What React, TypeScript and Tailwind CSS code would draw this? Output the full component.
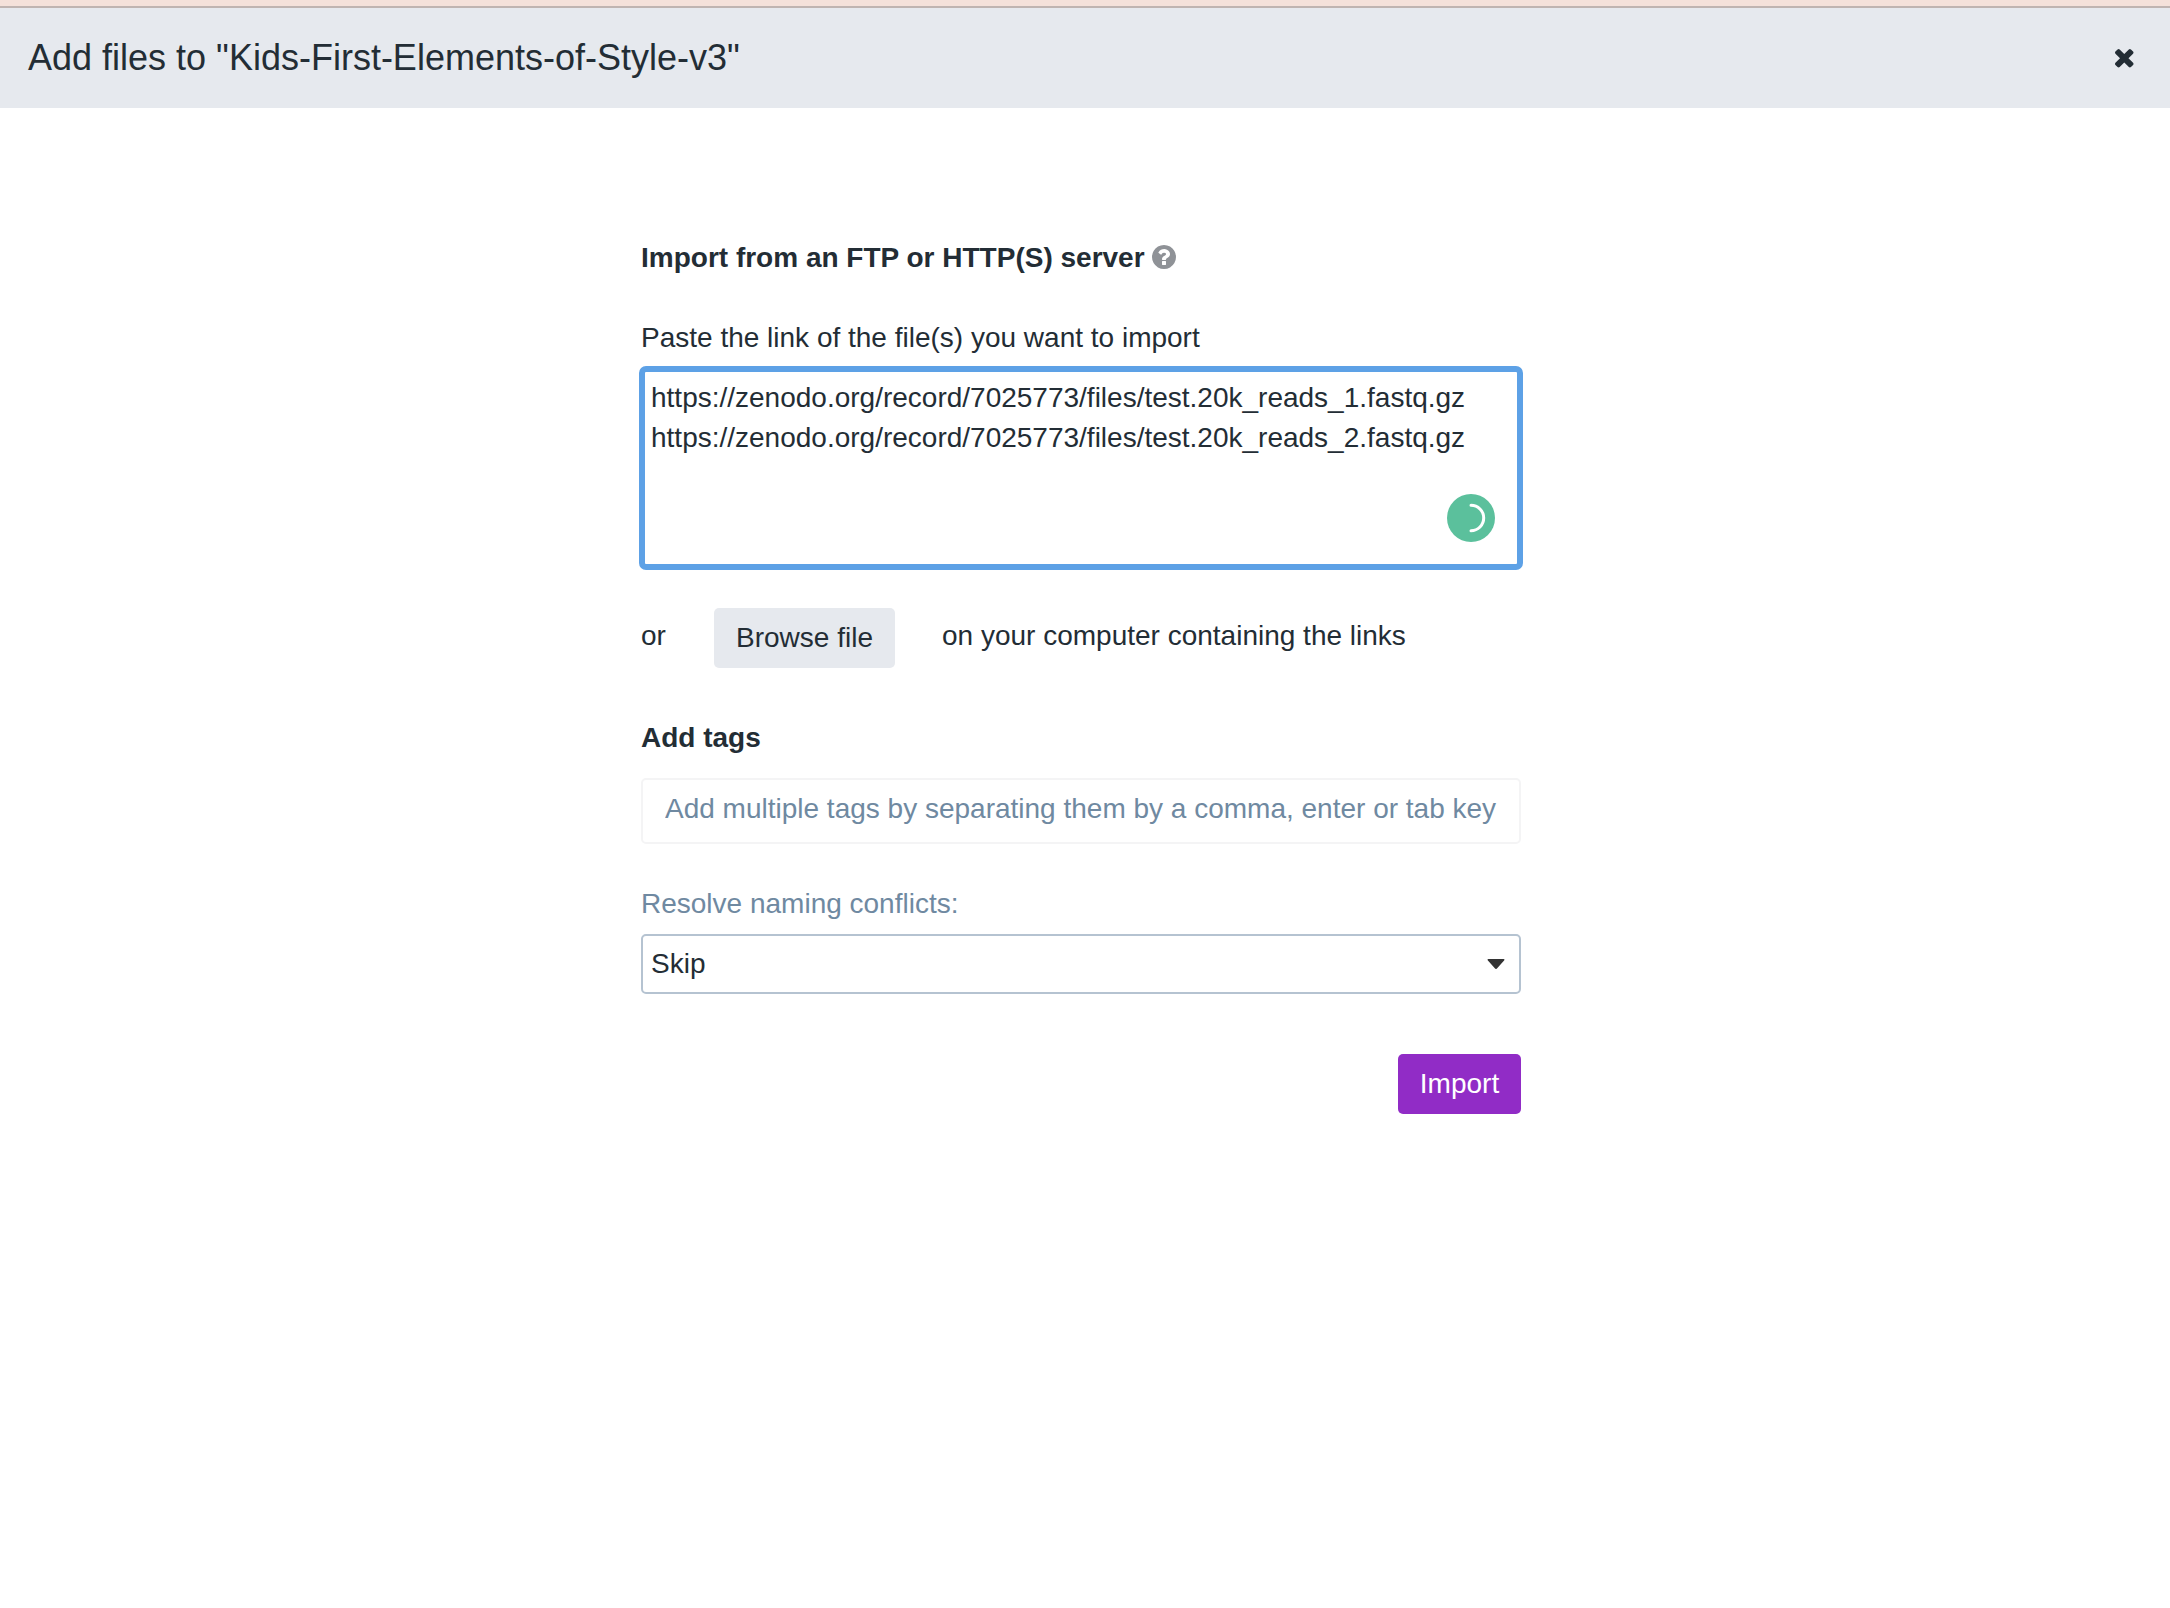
function CloseIcon() {
  return (
    <svg viewBox="110 366 1188 1188" className="block size-[18.500px]" fill="currentColor" aria-hidden="true">
      <path d="M1298 1322q0 40-28 68l-136 136q-28 28-68 28t-68-28l-294-294-294 294q-28 28-68 28t-68-28l-136-136q-28-28-28-68t28-68l294-294-294-294q-28-28-28-68t28-68l136-136q28-28 68-28t68 28l294 294 294-294q28-28 68-28t68 28l136 136q28 28 28 68t-28 68l-294 294 294 294q28 28 28 68z" />
    </svg>
  );
}

function HelpIcon() {
  return (
    <svg viewBox="128 128 1536 1536" className="block size-6 text-[#8f9297]" fill="currentColor" aria-hidden="true">
      <path d="M1024 1376v-192q0-14-9-23t-23-9h-192q-14 0-23 9t-9 23v192q0 14 9 23t23 9h192q14 0 23-9t9-23zm256-672q0-88-55.5-163t-138.5-116-170-41q-243 0-371 213-15 24 8 42l132 100q7 6 19 6 16 0 25-12 53-68 86-92 34-24 86-24 48 0 85.5 26t37.5 59q0 38-20 61t-68 45q-63 28-115.5 86.5t-52.5 125.5v36q0 14 9 23t23 9h192q14 0 23-9t9-23q0-19 21.5-49.5t54.5-49.5q32-18 49-28.5t46-35 44.5-48 28-60.5 12.5-81zm384 192q0 209-103 385.5t-279.5 279.5-385.5 103-385.5-103-279.5-279.5-103-385.5 103-385.5 279.5-279.5 385.5-103 385.5 103 279.5 279.5 103 385.5z" />
    </svg>
  );
}

function SpinnerBadge() {
  return (
    <svg viewBox="0 0 48 48" className="absolute right-7 bottom-7 size-12" aria-hidden="true">
      <circle cx="24" cy="24" r="24" fill="#5bc09c" />
      <path d="M24 11.3a12.7 12.7 0 0 1 0 25.4" fill="none" stroke="#fff" strokeWidth="3" strokeLinecap="round" />
    </svg>
  );
}

const links = [
  "https://zenodo.org/record/7025773/files/test.20k_reads_1.fastq.gz",
  "https://zenodo.org/record/7025773/files/test.20k_reads_2.fastq.gz",
];

export default function App() {
  return (
    <div className="min-h-[1608px] bg-white font-['Liberation_Sans',Arial,sans-serif] text-[28px] leading-10 text-[#232d35]">
      <div className="h-2 border-b-2 border-[#bfb4b1] bg-[#f4e1da]" />
      <header className="flex h-[100px] items-center justify-between bg-[#e6e9ee] pr-[36.500px] pl-7">
        <h1 className="text-[36px] leading-10">Add files to "Kids-First-Elements-of-Style-v3"</h1>
        <button aria-label="Close" className="mt-px">
          <CloseIcon />
        </button>
      </header>

      <main className="ml-[641px] flex w-[880px] flex-col pt-[130px]">
        <h2 className="flex items-center gap-[7px] font-bold">
          Import from an FTP or HTTP(S) server
          <span className="-mt-0.5">
            <HelpIcon />
          </span>
        </h2>

        <label htmlFor="links" className="mt-10">
          Paste the link of the file(s) you want to import
        </label>
        <div className="relative -mx-0.5 mt-2 h-[204px]">
          <textarea
            id="links"
            readOnly
            defaultValue={links.join("\n")}
            className="block size-full resize-none overflow-hidden rounded-[7px] border-6 border-[#5da1e6] bg-white px-[6px] pt-[6px] outline-none"
          />
          <SpinnerBadge />
        </div>

        <div className="mt-[38px] flex h-[60px] items-start">
          <span className="mt-2 w-[73px]">or</span>
          <button className="h-[60px] w-[181px] rounded-[5px] bg-[#e6e9ee]">Browse file</button>
          <span className="mt-2 ml-[47px]">on your computer containing the links</span>
        </div>

        <label htmlFor="tags" className="mt-[50px] font-bold">
          Add tags
        </label>
        <input
          id="tags"
          placeholder="Add multiple tags by separating them by a comma, enter or tab key"
          className="mt-5 h-[66px] rounded-[5px] border-2 border-[#f4f4f5] px-[22px] pb-1 outline-none placeholder:text-[#6f89a1] placeholder:opacity-100"
        />

        <span className="mt-10 text-[#6f89a1]">Resolve naming conflicts:</span>
        <button className="mt-[10px] flex h-[60px] items-center justify-between rounded-[5px] border-2 border-[#b5c3d1] pr-[14px] pl-2">
          <span>Skip</span>
          <svg viewBox="0 0 18 11" className="h-[10.500px] w-[18px]" aria-hidden="true">
            <path d="M1 0H17Q18.500 .4 17.500 1.500L10 10Q9 11 8 10L.5 1.500Q-.5 .4 1 0Z" fill="#333" />
          </svg>
        </button>

        <button className="mt-[60px] h-[60px] w-[123px] self-end rounded-[5px] bg-[#912cc6] text-white">
          Import
        </button>
      </main>
    </div>
  );
}
